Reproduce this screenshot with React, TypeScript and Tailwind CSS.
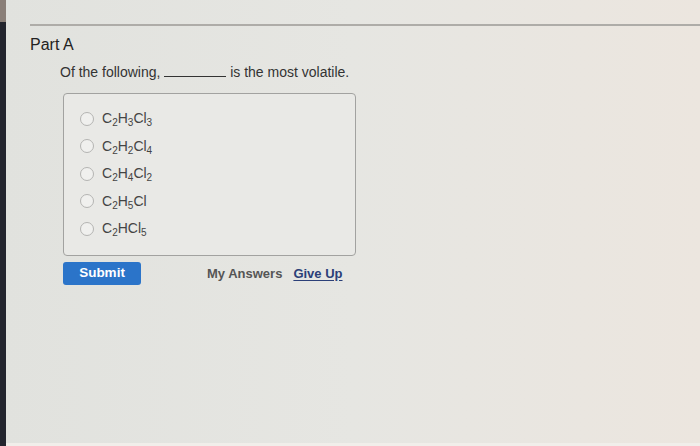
import React from "react";

const opciones: [string, string, string][] = [
  ["2", "3", "3"],
  ["2", "2", "4"],
  ["2", "4", "2"],
  ["2", "5", ""],
  ["2", "", "5"],
];

function Sub({ children }: { children: React.ReactNode }) {
  return <sub className="text-[10px] relative top-[3px]">{children}</sub>;
}

function Formula({ c, h, cl }: { c: string; h: string; cl: string }) {
  return (
    <span>
      C<Sub>{c}</Sub>H{h && <Sub>{h}</Sub>}Cl{cl && <Sub>{cl}</Sub>}
    </span>
  );
}

export default function App() {
  return (
    <div
      className="w-[700px] h-[446px] flex bg-linear-to-r from-[#e1e2de] via-[#e6e6e2] to-[#ece6df] text-[#2f2f2f] overflow-hidden"
      style={{ fontFamily: '"Liberation Sans", Arial, sans-serif' }}
    >
      {/* borde oscuro del monitor */}
      <div className="w-[6px] flex flex-col">
        <div className="h-[22px] bg-[#8a7f78]" />
        <div className="flex-1 bg-[#23252e]" />
      </div>

      <div className="flex-1 flex flex-col">
        <div className="h-[24px]" />
        <div className="ml-[24px] h-[2px] bg-[#aeaca8]" />

        <div className="pl-[24px] pt-[9px]">
          <h2 className="text-[16px] leading-[19px] font-normal text-[#222]">Part A</h2>

          <div className="pl-[30px] pt-[10px]">
            <p className="text-[14px] leading-[17px] text-[#333]">
              Of the following,{" "}
              <span className="inline-block w-[62px] border-b border-[#333] align-baseline" />{" "}
              is the most volatile.
            </p>

            <div className="mt-[12px] ml-[3px] w-[293px] h-[163px] border border-[#a2a2a0] rounded-[4px] bg-[#e9e9e6] pt-[16px] pl-[16px] flex flex-col gap-[10.5px]">
              {opciones.map(([c, h, cl], i) => (
                <label key={i} className="flex items-center gap-[8px] h-[17px] text-[14px] text-[#444]">
                  <span className="w-[14px] h-[14px] rounded-full border border-[#b4b4b2] bg-[#f0f0ee]" />
                  <Formula c={c} h={h} cl={cl} />
                </label>
              ))}
            </div>

            <div className="mt-[6px] ml-[3px] flex items-center">
              <button className="w-[78px] h-[23px] rounded-[3px] bg-[#2b74c9] text-white text-[13.5px] font-bold">
                Submit
              </button>
              <span className="ml-[66px] text-[13px] font-bold text-[#555]">My Answers</span>
              <span className="ml-[11px] text-[13px] font-bold text-[#2b3f78] underline underline-offset-2">Give Up</span>
            </div>
          </div>
        </div>

        <div className="flex-1" />
        <div className="h-[3px] bg-[#f1eeea]" />
      </div>
    </div>
  );
}
